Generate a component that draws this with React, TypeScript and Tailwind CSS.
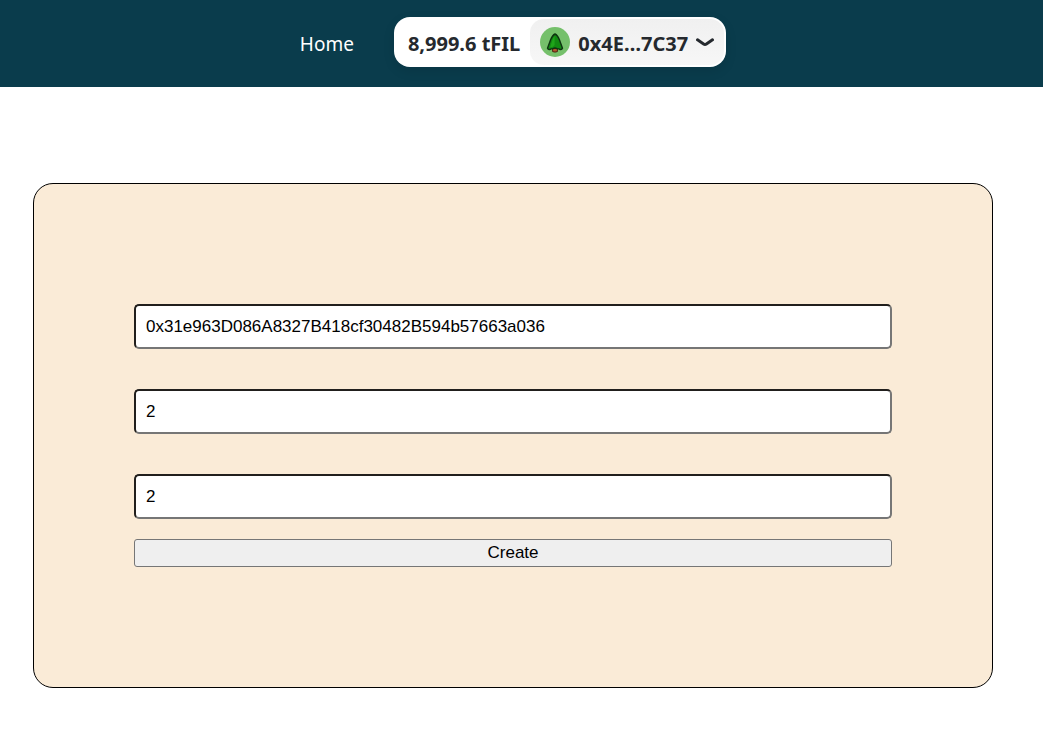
import { useState } from 'react';
import type { FormEvent } from 'react';

type Field = {
  id: string;
  label: string;
  value: string;
};

const initialFields: Field[] = [
  { id: 'address', label: 'Token address', value: '0x31e963D086A8327B418cf30482B594b57663a036' },
  { id: 'amount', label: 'Amount', value: '2' },
  { id: 'duration', label: 'Duration', value: '2' },
];

function TreeAvatar() {
  return (
    <span className="flex size-[30px] items-center justify-center rounded-full bg-[#75c06b]">
      <svg width="18" height="22" viewBox="0 0 18 22" aria-hidden="true">
        <path d="M6.600 17h4.800v3.600q-2.400 1-4.800 0z" fill="#b0532a" stroke="#4a2410" strokeWidth="1" />
        <path
          d="M9 3C7.200 3.800 5.600 6.200 4.600 8.800L1.500 17.200C2.200 18.700 4 18.900 5.200 17.800 6.400 18.400 7.200 17 9 17S11.600 18.400 12.800 17.800C14 18.900 15.800 18.700 16.500 17.200L13.400 8.800C12.400 6.200 10.800 3.800 9 3z"
          fill="#128a12"
          stroke="#0d3410"
          strokeWidth="1.400"
          strokeLinejoin="round"
        />
        <path d="M8.600 5.200C7.400 6.400 6.600 8.600 6 10.400L4.200 16.200Q7 16.600 8.600 14z" fill="#1fa51a" />
      </svg>
    </span>
  );
}

function Chevron() {
  return (
    <svg width="18" height="9" viewBox="0 0 18 9" fill="none" aria-hidden="true">
      <path d="M1.500 1.800L7.600 6Q9 7 10.400 6L16.500 1.800" stroke="#25292e" strokeWidth="2.900" strokeLinecap="round" />
    </svg>
  );
}

function Header() {
  return (
    <header className="flex h-[87px] items-center justify-center gap-10 bg-[#0a3c4c] pr-[17px] pb-[3px] font-['Noto_Sans',sans-serif]">
      <nav>
        <a href="#" className="block pt-1 text-[19px] text-white">
          Home
        </a>
      </nav>
      <button
        type="button"
        className="flex h-[50px] items-center rounded-2xl bg-white p-0.5 text-[20px] font-bold whitespace-nowrap text-[#25292e] shadow-[0_4px_12px_rgba(0,0,0,0.1)]"
      >
        <span className="pt-1 pr-2.5 pl-3">8,999.6 tFIL</span>
        <span className="flex h-full items-center gap-2 rounded-[14px] bg-linear-to-b from-[#f0f0f0] to-[#f7f7f7] px-2.5">
          <TreeAvatar />
          <span className="pt-1">0x4E…7C37</span>
          <Chevron />
        </span>
      </button>
    </header>
  );
}

export default function App() {
  const [fields, setFields] = useState(initialFields);

  const updateField = (id: string, value: string) => {
    setFields((prev) => prev.map((field) => (field.id === id ? { ...field, value } : field)));
  };

  const handleSubmit = (e: FormEvent) => {
    e.preventDefault();
  };

  return (
    <div className="min-h-screen bg-white text-black">
      <Header />

      {/* Create form */}
      <main className="pt-24 pr-[50px] pb-[46px] pl-[33px] font-['Liberation_Sans',sans-serif] text-[17px]">
        <form
          onSubmit={handleSubmit}
          className="flex flex-col rounded-[20px] border border-black bg-[#faebd7] px-[100px] py-[120px]"
        >
          <div className="flex flex-col gap-10">
            {fields.map((field) => (
              <input
                key={field.id}
                id={field.id}
                type="text"
                aria-label={field.label}
                value={field.value}
                onChange={(e) => updateField(field.id, e.target.value)}
                className="h-[45px] w-full rounded-[5px] border-2 border-t-[#211f1d] border-r-[#767676] border-b-[#767676] border-l-[#211f1d] bg-white px-2.5"
              />
            ))}
          </div>
          <button
            type="submit"
            className="mt-5 h-7 rounded-[3px] border border-[#767676] bg-[#efefef] leading-6"
          >
            Create
          </button>
        </form>
      </main>
    </div>
  );
}
